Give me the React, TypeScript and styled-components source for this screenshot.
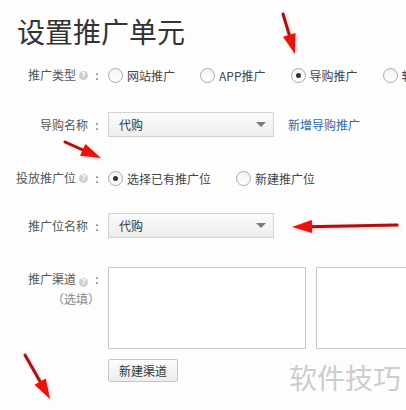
import styled, { createGlobalStyle } from 'styled-components';

const GlobalStyle = createGlobalStyle`
	html, body {
		margin: 0;
		padding: 0;
		background: #fdfdfd;
	}
	body {
		font-family: 'Noto Sans CJK SC', 'Noto Sans', sans-serif;
		color: #444;
		overflow: hidden;
	}
`;

const Page = styled.div`
	position: relative;
	width: 406px;
	height: 410px;
	overflow: hidden;
	padding: 17px 0 0 0;
	box-sizing: border-box;
`;

const Title = styled.h1`
	margin: 0 0 0 17px;
	font-size: 28px;
	line-height: 28px;
	font-weight: 400;
	color: #333;
`;

const Row = styled.div<{ top: number; h: number; align?: string }>`
	display: flex;
	align-items: ${({ align }) => align || 'center'};
	height: ${({ h }) => h}px;
	margin-top: ${({ top }) => top}px;
	gap: 7px;
`;

const Label = styled.div`
	width: 101px;
	flex: none;
	display: flex;
	justify-content: flex-end;
	align-items: center;
	font-size: 12px;
	line-height: 16px;
	color: #555;
	white-space: nowrap;
`;

const LabelStack = styled.div`
	width: 101px;
	flex: none;
	display: flex;
	flex-direction: column;
	align-items: flex-end;
	gap: 4px;
	padding-top: 4px;
	font-size: 12px;
	line-height: 16px;
	color: #555;
`;

const Optional = styled.span`
	color: #888;
	padding-right: 1px;
`;

const Help = styled.span`
	display: inline-flex;
	justify-content: center;
	align-items: center;
	width: 9px;
	height: 9px;
	margin-left: 3px;
	border-radius: 50%;
	background: #cfcfcf;
	color: #fff;
	font-family: 'DejaVu Sans', sans-serif;
	font-size: 7px;
	font-weight: 700;
	line-height: 1;
`;

const Colon = styled.span`
	display: inline-block;
	width: 8px;
	margin-left: 5px;
	text-align: center;
	color: #666;
`;

const Options = styled.div<{ gap: number }>`
	display: flex;
	align-items: center;
	gap: ${({ gap }) => gap}px;
	white-space: nowrap;
`;

const Option = styled.label`
	display: flex;
	align-items: center;
	gap: 4px;
	font-size: 12px;
	color: #444;
`;

const Radio = styled.span<{ checked?: boolean }>`
	position: relative;
	width: 13px;
	height: 13px;
	border-radius: 50%;
	border: 1px solid #a8a8a8;
	background: linear-gradient(#f2f2f2, #ffffff);
	flex: none;
	&::after {
		content: '';
		display: ${({ checked }) => (checked ? 'block' : 'none')};
		position: absolute;
		left: 4px;
		top: 4px;
		width: 5px;
		height: 5px;
		border-radius: 50%;
		background: #333;
	}
`;

const Select = styled.div`
	display: flex;
	align-items: center;
	justify-content: space-between;
	width: 166px;
	height: 25px;
	box-sizing: border-box;
	padding: 0 7px 0 10px;
	border: 1px solid #d2d2d2;
	background: linear-gradient(#fbfbfb, #ededed);
	font-size: 12px;
	color: #333;
`;

const Caret = styled.span`
	width: 0;
	height: 0;
	border-left: 5px solid transparent;
	border-right: 5px solid transparent;
	border-top: 5px solid #7a7a7a;
`;

const Link = styled.a`
	margin-left: 7px;
	font-size: 12px;
	color: #2f6aa3;
	text-decoration: none;
`;

const Boxes = styled.div`
	display: flex;
	gap: 10px;
`;

const TextBox = styled.div`
	width: 198px;
	height: 82px;
	flex: none;
	box-sizing: border-box;
	border: 1px solid #c8c8c8;
	background: #fff;
`;

const Button = styled.button`
	margin-left: 108px;
	margin-top: 10px;
	width: 70px;
	height: 23px;
	padding: 0;
	border: 1px solid #c6c6c6;
	border-radius: 2px;
	background: linear-gradient(#fdfdfd, #ececec);
	font-family: inherit;
	font-size: 12px;
	color: #333;
`;

const Watermark = styled.div`
	position: absolute;
	left: 289px;
	top: 361px;
	font-size: 28px;
	line-height: 32px;
	color: #cdcdcd;
	letter-spacing: 0;
`;

const Overlay = styled.svg`
	position: absolute;
	left: 0;
	top: 0;
	pointer-events: none;
`;

type Pt = [number, number];

const Arrow = ({ tail, tip }: { tail: Pt; tip: Pt }) => {
	const dx = tip[0] - tail[0];
	const dy = tip[1] - tail[1];
	const len = Math.hypot(dx, dy);
	const ux = dx / len;
	const uy = dy / len;
	const head = 20;
	const half = 6.5;
	const bx = tip[0] - ux * head;
	const by = tip[1] - uy * head;
	const head1 = `${bx - uy * half},${by + ux * half}`;
	const head2 = `${bx + uy * half},${by - ux * half}`;
	return (
		<g filter='url(#soft)'>
			<line x1={tail[0]} y1={tail[1]} x2={bx + ux * 4} y2={by + uy * 4} stroke='#a01818' strokeWidth={3} strokeLinecap='round' />
			<polygon points={`${tip[0]},${tip[1]} ${head1} ${head2}`} fill='#e2130f' />
		</g>
	);
};

const App = () => (
	<Page>
		<GlobalStyle />
		<Title>设置推广单元</Title>

		<Row top={18} h={24}>
			<Label>
				推广类型<Help>?</Help><Colon>:</Colon>
			</Label>
			<Options gap={25}>
				<Option><Radio />网站推广</Option>
				<Option><Radio />APP推广</Option>
				<Option><Radio checked />导购推广</Option>
				<Option><Radio />软件推广</Option>
			</Options>
		</Row>

		<Row top={25} h={25}>
			<Label>
				导购名称<Colon>:</Colon>
			</Label>
			<Select>
				代购
				<Caret />
			</Select>
			<Link href='#'>新增导购推广</Link>
		</Row>

		<Row top={29} h={24}>
			<Label>
				投放推广位<Help>?</Help><Colon>:</Colon>
			</Label>
			<Options gap={25}>
				<Option><Radio checked />选择已有推广位</Option>
				<Option><Radio />新建推广位</Option>
			</Options>
		</Row>

		<Row top={23} h={25}>
			<Label>
				推广位名称<Colon>:</Colon>
			</Label>
			<Select>
				代购
				<Caret />
			</Select>
		</Row>

		<Row top={29} h={82} align='flex-start'>
			<LabelStack>
				<span>
					推广渠道<Help>?</Help><Colon>:</Colon>
				</span>
				<Optional>（选填）</Optional>
			</LabelStack>
			<Boxes>
				<TextBox />
				<TextBox />
			</Boxes>
		</Row>

		<Button>新建渠道</Button>

		<Watermark>软件技巧</Watermark>

		<Overlay width={406} height={410} viewBox='0 0 406 410'>
			<defs>
				<filter id='soft' x='-20%' y='-20%' width='140%' height='140%'>
					<feGaussianBlur in='SourceAlpha' stdDeviation='1.5' />
					<feOffset dx='1' dy='1' result='b' />
					<feFlood floodColor='#e03030' floodOpacity='0.35' />
					<feComposite in2='b' operator='in' />
					<feMerge>
						<feMergeNode />
						<feMergeNode in='SourceGraphic' />
					</feMerge>
				</filter>
			</defs>
			<Arrow tail={[283, 14]} tip={[295, 54]} />
			<Arrow tail={[65, 142]} tip={[101, 158]} />
			<Arrow tail={[397, 225]} tip={[292, 227]} />
			<Arrow tail={[25, 355]} tip={[50, 399]} />
		</Overlay>
	</Page>
);

export default App;
